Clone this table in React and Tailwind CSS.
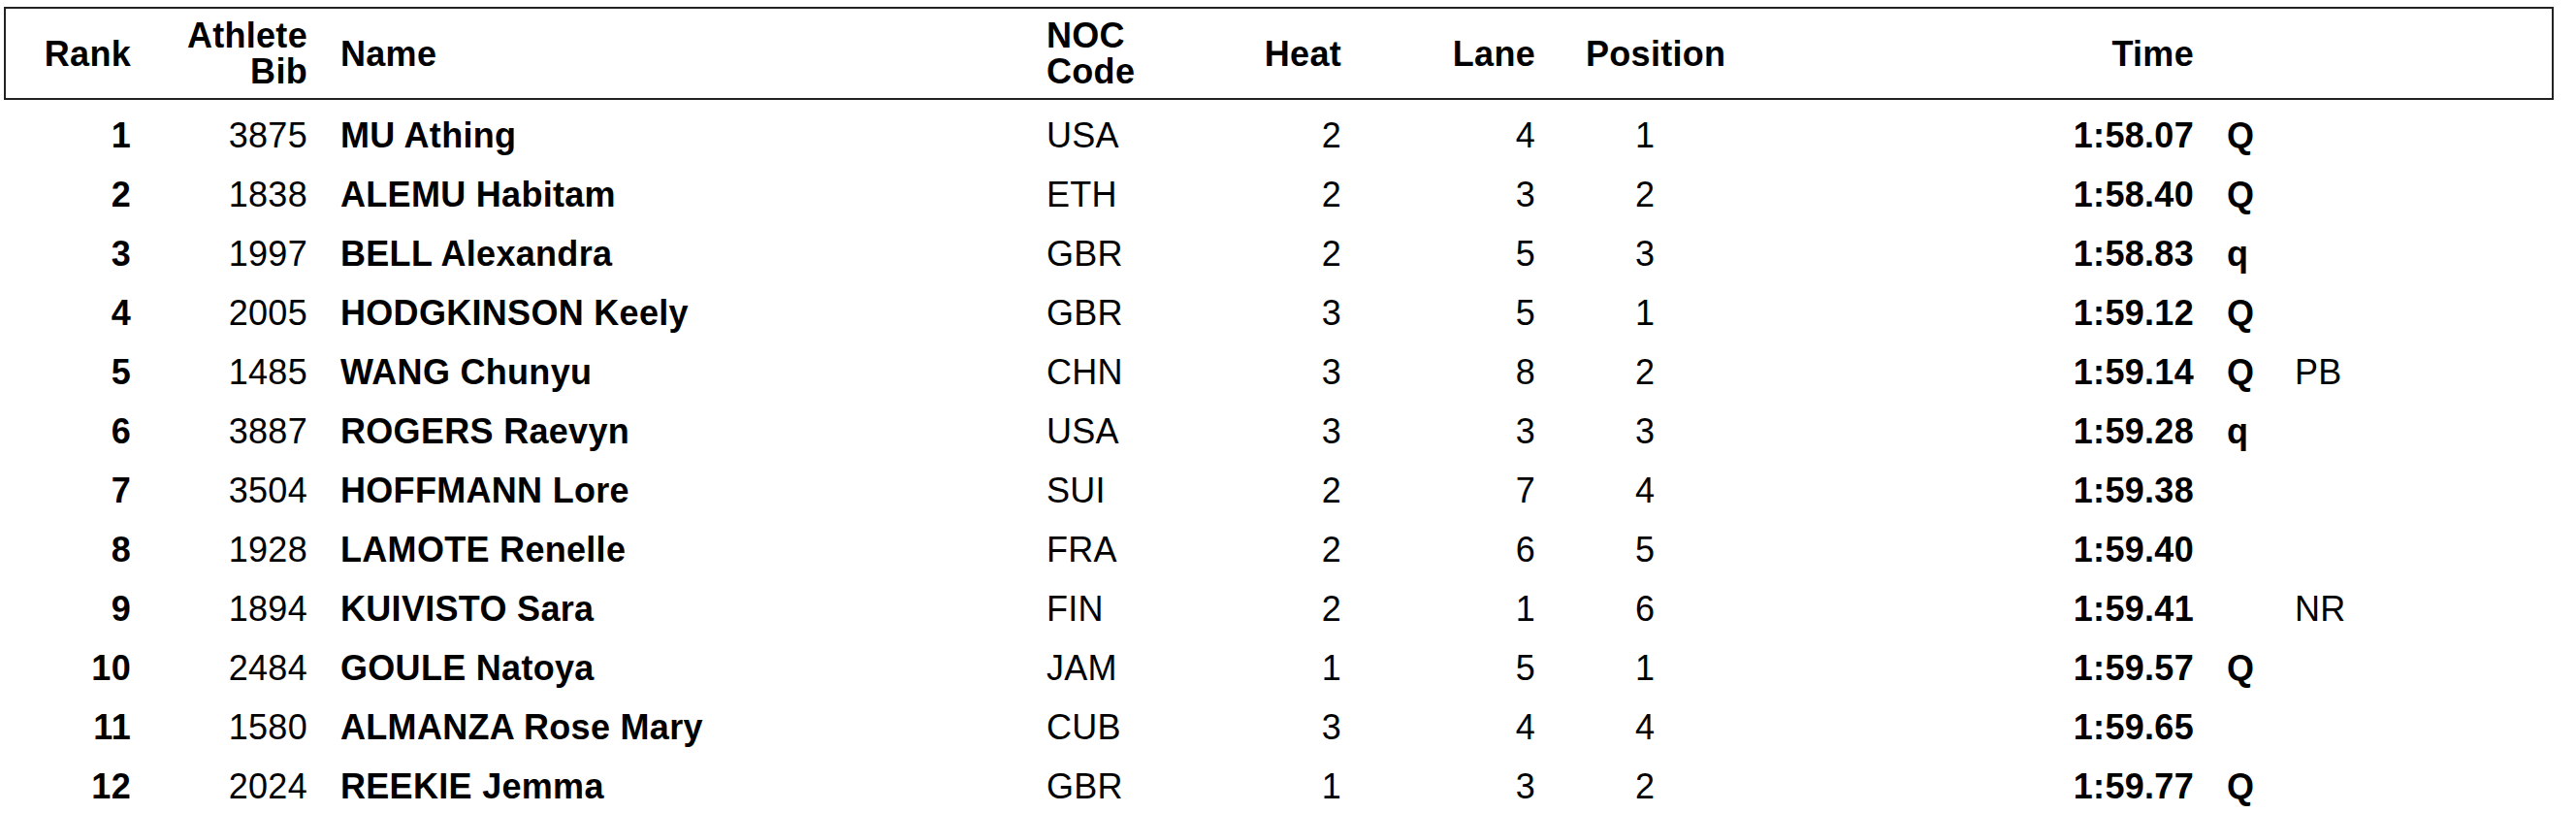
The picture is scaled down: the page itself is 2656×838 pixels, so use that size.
import React from "react";

const rows = [
  ["1", "3875", "MU Athing", "USA", "2", "4", "1", "1:58.07", "Q", ""],
  ["2", "1838", "ALEMU Habitam", "ETH", "2", "3", "2", "1:58.40", "Q", ""],
  ["3", "1997", "BELL Alexandra", "GBR", "2", "5", "3", "1:58.83", "q", ""],
  ["4", "2005", "HODGKINSON Keely", "GBR", "3", "5", "1", "1:59.12", "Q", ""],
  ["5", "1485", "WANG Chunyu", "CHN", "3", "8", "2", "1:59.14", "Q", "PB"],
  ["6", "3887", "ROGERS Raevyn", "USA", "3", "3", "3", "1:59.28", "q", ""],
  ["7", "3504", "HOFFMANN Lore", "SUI", "2", "7", "4", "1:59.38", "", ""],
  ["8", "1928", "LAMOTE Renelle", "FRA", "2", "6", "5", "1:59.40", "", ""],
  ["9", "1894", "KUIVISTO Sara", "FIN", "2", "1", "6", "1:59.41", "", "NR"],
  ["10", "2484", "GOULE Natoya", "JAM", "1", "5", "1", "1:59.57", "Q", ""],
  ["11", "1580", "ALMANZA Rose Mary", "CUB", "3", "4", "4", "1:59.65", "", ""],
  ["12", "2024", "REEKIE Jemma", "GBR", "1", "3", "2", "1:59.77", "Q", ""],
];

// column widths measured from the results sheet, starting 6px in from the page edge
const cols = "grid grid-cols-[129px_182px_762px_121px_183px_200px_217px_462px_104px_1fr]";

function Header() {
  return (
    <div className="ml-[4px] mt-[7px] w-[2629px] h-[96px] border-2 border-[#222] flex items-center">
      <div className={`${cols} w-full items-center font-bold leading-[37px]`}>
        <div className="text-right">Rank</div>
        <div className="text-right">
          <div>Athlete</div>
          <div>Bib</div>
        </div>
        <div className="pl-[34px]">Name</div>
        <div>
          <div>NOC</div>
          <div>Code</div>
        </div>
        <div className="text-right">Heat</div>
        <div className="text-right">Lane</div>
        <div className="pl-[52px]">Position</div>
        <div className="text-right">Time</div>
        <div />
        <div />
      </div>
    </div>
  );
}

function Row({ r }) {
  const [rank, bib, name, noc, heat, lane, pos, time, q, rec] = r;
  return (
    <div className={`${cols} h-[61px] leading-[61px] whitespace-nowrap`}>
      <div className="text-right font-bold">{rank}</div>
      <div className="text-right">{bib}</div>
      <div className="pl-[34px] font-bold">{name}</div>
      <div>{noc}</div>
      <div className="text-right">{heat}</div>
      <div className="text-right">{lane}</div>
      <div className="pl-[103px]">{pos}</div>
      <div className="text-right font-bold">{time}</div>
      <div className="pl-[34px] font-bold">{q}</div>
      <div>{rec}</div>
    </div>
  );
}

export default function App() {
  return (
    <div className="w-[2656px] h-[838px] overflow-hidden bg-white text-black text-[36px] tracking-[0.3px] font-['Liberation_Sans',Arial,sans-serif]">
      <Header />
      <div className="pl-[6px] mt-[6px]">
        {rows.map((r) => (
          <Row key={r[0]} r={r} />
        ))}
      </div>
    </div>
  );
}
